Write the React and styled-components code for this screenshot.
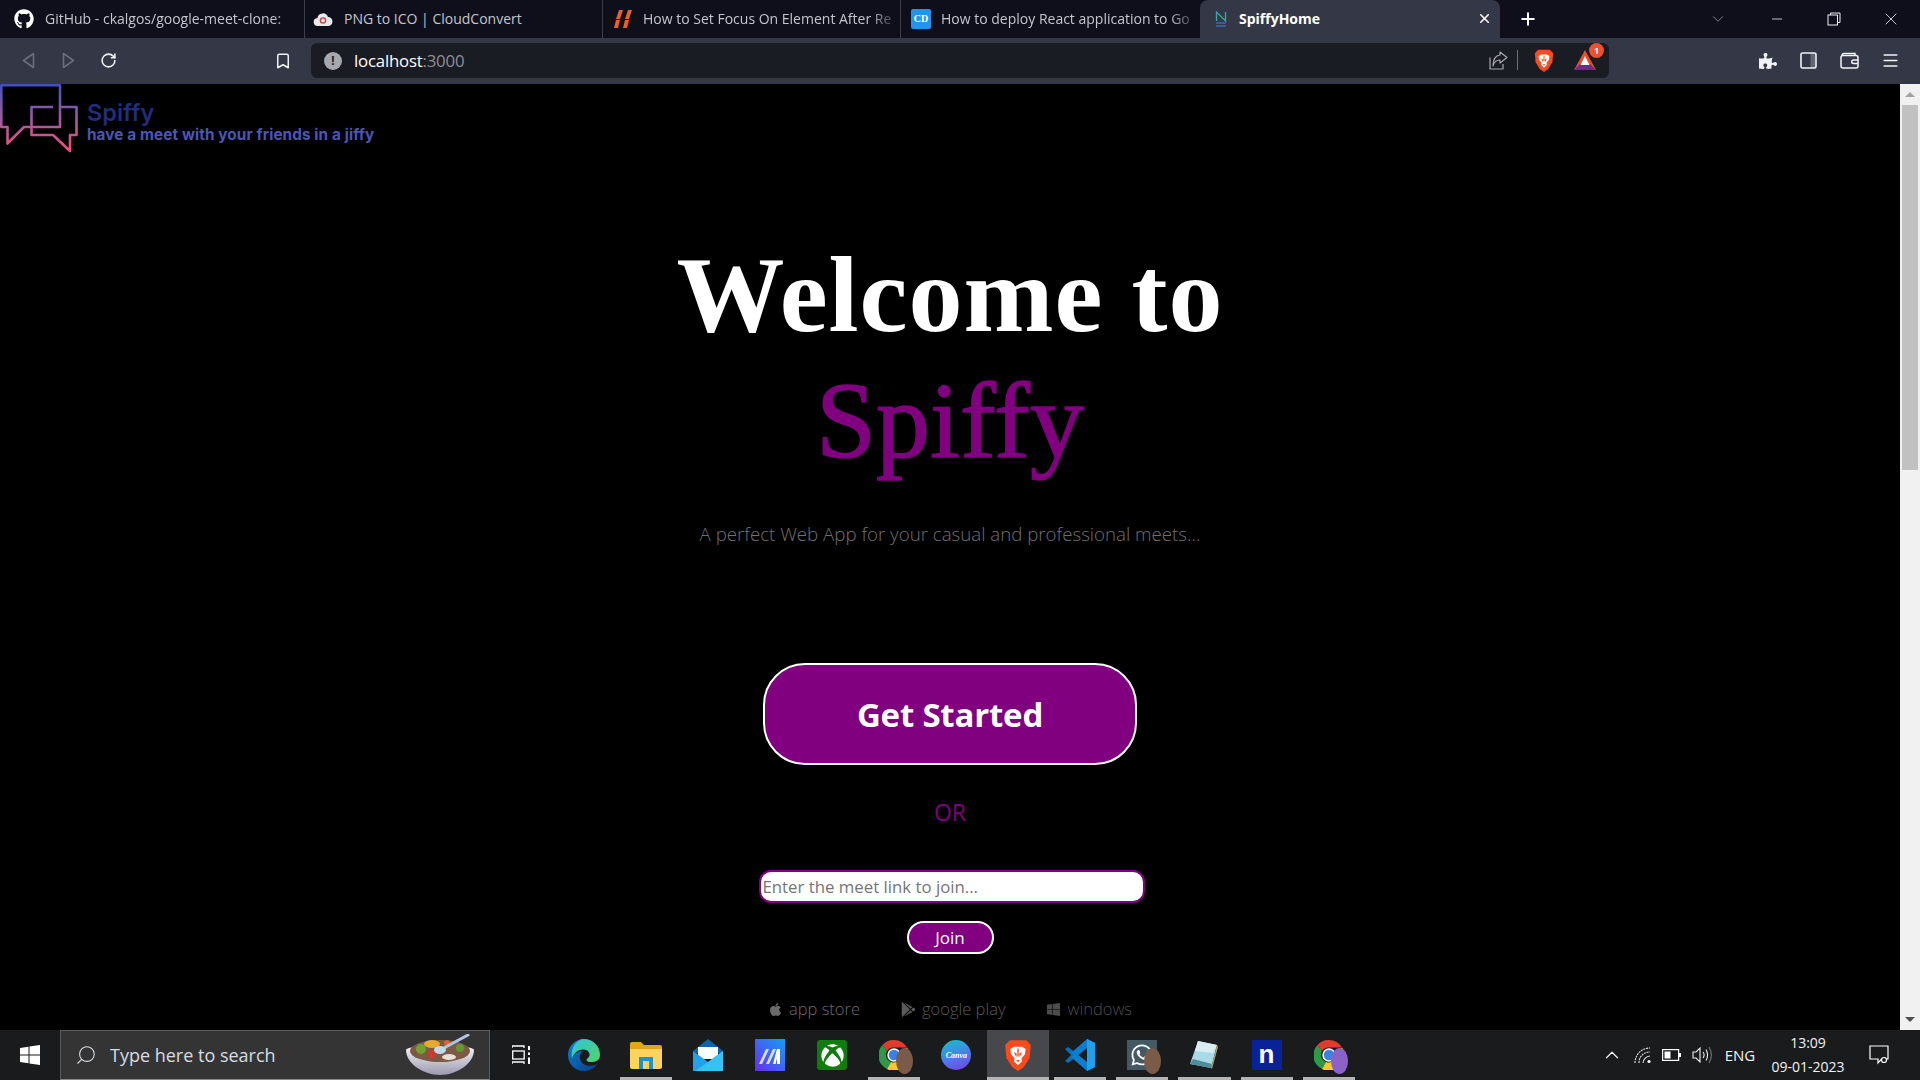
import React from "react";
import styled, { createGlobalStyle } from "styled-components";
import { FaGithub, FaApple, FaGooglePlay, FaWindows, FaXbox, FaWhatsapp, FaPuzzlePiece } from "react-icons/fa";
import { ChevronDown, Minus, X, Plus, RotateCw, Bookmark, Search, ChevronUp, Menu } from "lucide-react";

const UI = `"Open Sans", "Noto Sans", "Liberation Sans", sans-serif`;

const Global = createGlobalStyle`
  html, body { margin: 0; padding: 0; height: 100%; overflow: hidden; background: #000; }
  #root { height: 100%; }
  * { box-sizing: border-box; }
`;

const Screen = styled.div`
  width: 1920px; height: 1080px; display: flex; flex-direction: column;
  font-family: ${UI}; overflow: hidden;
`;

/* ---------- tab strip ---------- */
const TabStrip = styled.div`
  height: 38px; flex: none; display: flex; background: #0e0f1a;
`;
const Tab = styled.div`
  width: ${p => p.$w}px; height: 38px; flex: none; display: flex; align-items: center;
  padding-left: ${p => p.$pad}px; padding-bottom: 1px; gap: ${p => p.$gap}px; position: relative;
  background: ${p => (p.$active ? "#343846" : "transparent")};
  border-radius: ${p => (p.$active ? "8px 8px 0 0" : "0")};
  color: ${p => (p.$active ? "#fff" : "#c3c6cf")};
  font-size: 14px; font-weight: ${p => (p.$active ? 700 : 400)};
  border-right: ${p => (p.$sep ? "1px solid #3a3d4a" : "none")};
`;
const TabIcon = styled.span`
  width: 20px; height: 20px; flex: none; display: flex; align-items: center; justify-content: center;
`;
const TabLabel = styled.span`
  flex: 1; white-space: nowrap; overflow: hidden; padding-right: 4px;
  mask-image: ${p => (p.$fade ? "linear-gradient(to right, #000 88%, transparent 100%)" : "none")};
`;
const TabClose = styled.span`
  width: 32px; flex: none; display: flex; justify-content: center; color: #fff;
`;
const NewTab = styled.div`
  width: 55px; display: flex; align-items: center; justify-content: center; color: #fff;
`;
const WindowControls = styled.div`
  margin-left: auto; display: flex; align-items: center; color: #e4e5ea;
`;
const WinBtn = styled.div`
  width: ${p => p.$w || 57}px; height: 38px; display: flex; align-items: center; justify-content: center;
  color: ${p => p.$dim ? "#9da0aa" : "#eceef2"};
`;
const RestoreIcon = () => (
  <svg width="14" height="14" viewBox="0 0 14 14" fill="none" stroke="currentColor" strokeWidth="1">
    <rect x="1" y="3" width="9.5" height="10" /><path d="M3.5 3V1H13V10.5H10.5" />
  </svg>
);

/* ---------- toolbar ---------- */
const Toolbar = styled.div`
  height: 46px; flex: none; display: flex; align-items: flex-start; background: #343846;
  padding: 5px 8px 0 8px;
`;
const NavBtn = styled.div`
  width: ${p => p.$w || 40}px; height: 35px; flex: none; display: flex; align-items: center; justify-content: center;
  color: ${p => (p.$off ? "#6b6e7a" : "#f1f2f5")};
`;
const NavGap = styled.div`width: 135px; flex: none;`;
const AddressBar = styled.div`
  width: 1298px; height: 35px; flex: none; margin-left: 8px; margin-right: 138px;
  display: flex; align-items: center; padding-left: 13px; background: #1a1c24; border-radius: 6px;
  position: relative;
`;
const InfoDot = styled.span`
  width: 18px; height: 18px; border-radius: 50%; background: #a6a8ae; color: #1a1c24; flex: none;
  display: flex; align-items: center; justify-content: center; font: 700 13px "Liberation Sans", sans-serif;
`;
const Url = styled.span`
  margin-left: 12px; font-size: 16.8px; color: #fff; letter-spacing: -0.2px; span { color: #8d8f96; }
`;
const AddressActions = styled.div`
  margin-left: auto; display: flex; align-items: center; padding-right: 3px;
`;
const ActionSlot = styled.span`
  width: ${p => p.$w}px; margin-left: ${p => p.$ml || 0}px; display: flex; justify-content: center; align-items: center; position: relative; color: #9a9ca3;
`;
const ActionSep = styled.span`width: 1px; height: 20px; background: #6e7079; flex: none; margin: 0 14px 0 6px;`;
const Badge = styled.span`
  position: absolute; top: -6px; right: 2px; width: 15px; height: 15px; border-radius: 50%;
  background: #f0502d; color: #fff; font-size: 9px; font-weight: 700;
  display: flex; align-items: center; justify-content: center;
`;

/* ---------- viewport ---------- */
const Viewport = styled.div`flex: 1; min-height: 0; display: flex; background: #000;`;
const Page = styled.main`flex: 1; min-width: 0; overflow: hidden; display: flex; flex-direction: column;`;
const Brand = styled.header`height: 66px; flex: none; display: flex; gap: 9px;`;
const BrandText = styled.div`
  padding-top: 16px; display: flex; flex-direction: column; font-family: Inter, "Noto Sans", sans-serif; font-weight: 700;
`;
const BrandName = styled.div`font-size: 23.5px; line-height: 26px; color: #232c7e; font-weight: 600;`;
const BrandTag = styled.div`font-size: 15.3px; line-height: 18px; color: #4a56b6; letter-spacing: .1px;`;

const Hero = styled.section`
  padding-top: 82px; display: flex; flex-direction: column; align-items: center;
`;
const Title = styled.h1`
  margin: 0; font-family: "Liberation Serif", serif; font-size: 108px; line-height: 126px; text-align: center;
  font-weight: 700; color: #fff; letter-spacing: 1px;
  span { display: block; color: #800080; font-weight: 400; letter-spacing: 0; -webkit-text-stroke: 1.5px #800080; }
`;
const Subtitle = styled.p`
  margin: 36px 0 0; font-size: 18.7px; line-height: 28px; font-weight: 300; color: #707070;
`;
const GetStarted = styled.button`
  margin-top: 115px; width: 374px; height: 102px; border: 2.5px solid #fff; border-radius: 42px; background: #800080;
  color: #fff; font: 700 33px ${UI}; letter-spacing: -0.2px;
`;
const Or = styled.div`margin-top: 30px; font-size: 23px; line-height: 34px; font-weight: 400; color: #800080;`;
const JoinInput = styled.input`
  margin-top: 41px; width: 386px; height: 33px; border: 2px solid #800080; border-radius: 12px; background: #fff;
  padding: 0 2px; font: 400 16.8px ${UI}; margin-left: 3px;
  &::placeholder { color: #757575; opacity: 1; }
`;
const JoinBtn = styled.button`
  margin-top: 18px; width: 87px; height: 33px; border: 2px solid #fff; border-radius: 17px; background: #800080;
  color: #fff; font: 400 17px ${UI}; padding: 0;
`;
const Stores = styled.div`
  margin-top: 43px; display: flex; gap: 41px; margin-left: 0; font-size: 16.5px; line-height: 24px; font-weight: 300;
`;
const Store = styled.span`
  display: flex; align-items: center; gap: ${p => p.$gap}px; color: ${p => p.$c};
`;

/* ---------- scrollbar ---------- */
const Scrollbar = styled.div`
  width: 20px; flex: none; background: #f1f1f1; display: flex; flex-direction: column; align-items: center;
`;
const ScrollArrow = styled.div`
  height: 21px; flex: none; display: flex; align-items: center; justify-content: center;
  &::before {
    content: ""; border-left: 5px solid transparent; border-right: 5px solid transparent;
    ${p => (p.$down ? "border-top: 5px solid #505050;" : "border-bottom: 5px solid #a3a3a3;")}
  }
`;
const ScrollThumb = styled.div`width: 16px; height: 365px; flex: none; background: #c1c1c1;`;
const ScrollSpace = styled.div`flex: 1;`;

/* ---------- taskbar ---------- */
const Taskbar = styled.footer`
  height: 50px; flex: none; display: flex; background: #1a1b1d; color: #fff;
`;
const StartBtn = styled.div`width: 60px; flex: none; display: flex; align-items: center; justify-content: center;`;
const SearchBox = styled.div`
  width: 430px; flex: none; background: #343434; border: 1px solid #5a5a5a; border-bottom-color: #888;
  display: flex; align-items: center; padding-left: 14px; gap: 13px; overflow: hidden; position: relative;
  font-size: 18px; color: #d8dce0;
`;
const BowlWrap = styled.span`margin-left: auto; margin-right: 15px; display: flex;`;
const AppSlot = styled.div`
  width: ${p => p.$w || 62.05}px; flex: none; display: flex; align-items: center; justify-content: center; position: relative;
  background: ${p => (p.$active ? "#47484c" : "transparent")};
  &::after {
    content: ""; position: absolute; left: 5px; right: 5px; bottom: 0; height: 3px;
    background: ${p => (p.$open ? "#b4b4b4" : "transparent")};
    ${p => p.$active && "left: 0; right: 0;"}
  }
`;
const Overlay = styled.span`
  position: absolute; right: ${p => p.$r}px; bottom: ${p => p.$b}px; width: 17px; height: 26px; border-radius: 50%;
  background: ${p => p.$c};
`;
const Tray = styled.div`margin-left: auto; display: flex; align-items: center; padding-right: 18px;`;
const TraySlot = styled.div`
  width: ${p => p.$w}px; display: flex; align-items: center; justify-content: center; color: #f2f2f2;
  font-size: ${p => p.$fs || 14}px;
`;
const Clock = styled.div`
  width: 96px; text-align: center; font-size: 14px; line-height: 24px; color: #f2f2f2;
`;
const CanvaDisk = styled.span`
  width: 30px; height: 30px; border-radius: 50%;
  background: linear-gradient(160deg, #10c5c5 0%, #4d7bea 55%, #7a3bea 100%);
  font: italic 700 8px "Liberation Serif", serif; color: #fff; display: flex; align-items: center; justify-content: center;
`;
const NotionSquare = styled.span`
  width: 30px; height: 30px; background: #0a2299; color: #fff; display: flex; align-items: center; justify-content: center;
  font: 700 26px/1 "Liberation Sans", sans-serif; padding-bottom: 3px;
`;
const TileSquare = styled.span`
  width: 30px; height: 30px; display: flex; align-items: center; justify-content: center; background: ${p => p.$c}; color: #fff;
  border-radius: ${p => p.$r || 0}px;
`;

/* ---------- drawings ---------- */
const Logo = () => (
  <svg width="78" height="70" viewBox="0 0 78 70" fill="none" strokeWidth="2.6" strokeLinejoin="round">
    <defs>
      <linearGradient id="lg" gradientUnits="userSpaceOnUse" x1="0" y1="0" x2="0" y2="66">
        <stop offset="0" stopColor="#4052b8" /><stop offset=".55" stopColor="#a55aa0" /><stop offset="1" stopColor="#ef4d7c" />
      </linearGradient>
    </defs>
    <path stroke="url(#lg)" d="M1.3 1.3H60V43H24L7.5 59.5V43H1.3Z" />
    <path stroke="url(#lg)" d="M53 23H31.5V51H53L70 67V51H76.5V23H60" />
  </svg>
);
const CloudIcon = () => (
  <svg width="20" height="16" viewBox="0 0 20 16">
    <path fill="#e9e9e9" d="M5 15a4 4 0 0 1-.6-8A5.5 5.5 0 0 1 15 6a4.5 4.5 0 0 1 0 9Z" />
    <circle cx="10" cy="9.5" r="2.6" fill="none" stroke="#d63a3a" strokeWidth="1.4" />
  </svg>
);
const SlashIcon = () => (
  <svg width="20" height="20" viewBox="0 0 20 20" fill="#e8602f">
    <path d="M6 1h4L7 10H3Z M3 11h4l-2 8H1Z M15 1h4l-3 9h-4Z M12 11h4l-2 8h-4Z" />
  </svg>
);
const CdIcon = styled.span`
  width: 20px; height: 20px; background: #1e96ef; border-radius: 2px; color: #fff;
  font: 700 10px "Liberation Serif", serif; display: flex; align-items: center; justify-content: center;
`;
const SpiffyFav = () => (
  <svg width="12" height="18" viewBox="0 0 12 18" fill="none" strokeWidth="1.3">
    <path stroke="#35a7b0" d="M1.5 11V2L10.5 11V2" /><path stroke="#3a66c4" d="M1 13h10M1 16h10" />
  </svg>
);
const BackIcon = ({ flip }) => (
  <svg width="13" height="17" viewBox="0 0 13 17" fill="none" stroke="currentColor" strokeWidth="1.6" strokeLinejoin="round"
    style={flip ? { transform: "scaleX(-1)" } : undefined}>
    <path d="M11.5 1.5V15.5L1.5 8.5Z" />
  </svg>
);
const ShareIcon = () => (
  <svg width="19" height="19" viewBox="0 0 19 19" fill="none" stroke="#a5a7ad" strokeWidth="1.2" strokeLinejoin="round">
    <path d="M1 6.5V18H14V13" /><path d="M11 1L18 6.5L11 12V9C7 9 5 11 4 15C4 9 6 4.5 11 4Z" />
  </svg>
);
const BraveIcon = ({ size }) => (
  <svg width={size} height={size * 1.17} viewBox="0 0 24 28">
    <path fill="#fb4a1c" d="M5 1H19L23 5L22 16L17 24L12 27.5L7 24L2 16L1 5Z" />
    <path fill="#fff" d="M5.5 8.5L8.5 6.5H15.5L18.5 8.5L18 13L15 16.5L15.5 19L12 22.5L8.5 19L9 16.5L6 13Z" />
    <path fill="#fb4a1c" d="M8.5 11L11 12.5L10.5 15.5Z M15.5 11L13 12.5L13.5 15.5Z M10.5 18H13.5L12 20Z M11.4 8H12.6V15H11.4Z" />
  </svg>
);
const BatIcon = () => (
  <svg width="24" height="22" viewBox="0 0 24 22">
    <path fill="#f04a2a" d="M12 1L23 21H1Z" />
    <path fill="#6e2b8e" d="M1 21L7 15H17L23 21Z" />
    <path fill="#fff" d="M12 7L16.5 16H7.5Z" />
  </svg>
);
const SidebarIcon = () => (
  <svg width="17" height="17" viewBox="0 0 17 17" fill="none" stroke="#f1f2f5" strokeWidth="1.6">
    <rect x="1" y="1" width="15" height="15" rx="1.5" /><path d="M10 1V16" strokeWidth="5" strokeOpacity=".25" transform="translate(3)" />
  </svg>
);
const WalletIcon = () => (
  <svg width="19" height="17" viewBox="0 0 19 17" fill="none" stroke="#f1f2f5" strokeWidth="1.5">
    <path d="M2 3.5A2 2 0 0 1 4 1.5H15V4" /><rect x="1" y="3.5" width="17" height="12.5" rx="2" /><path d="M18 8H13.5A1.5 1.5 0 0 0 13.5 11.5H18" />
  </svg>
);
const WinLogo = () => (
  <svg width="20" height="20" viewBox="0 0 20 20" fill="#fff">
    <path d="M0 3L8.5 1.8V9.5H0Z M9.5 1.6L20 0V9.5H9.5Z M0 10.5H8.5V18.2L0 17Z M9.5 10.5H20V20L9.5 18.4Z" />
  </svg>
);
const Bowl = () => (
  <svg width="68" height="42" viewBox="0 0 68 42">
    <defs>
      <linearGradient id="bw" x1="0" y1="0" x2="0" y2="1"><stop offset="0" stopColor="#f6f5fb" /><stop offset="1" stopColor="#9c98ad" /></linearGradient>
    </defs>
    <path fill="url(#bw)" d="M0 16C0 10 68 10 68 16C68 30 50 41 34 41C18 41 0 30 0 16Z" />
    <ellipse cx="34" cy="17" rx="30" ry="11" fill="#7c5a45" />
    <circle cx="15" cy="15" r="5" fill="#6fa32b" /><circle cx="26" cy="20" r="4" fill="#cf3a2e" />
    <ellipse cx="26" cy="10" rx="8" ry="4" fill="#e5a92c" /><circle cx="54" cy="14" r="4" fill="#5f9b2c" />
    <ellipse cx="43" cy="23" rx="7" ry="3" fill="#eadfd6" /><circle cx="41" cy="9" r="3" fill="#d9662b" />
    <path stroke="#a9c8e8" strokeWidth="3" strokeLinecap="round" d="M36 15L62 1" />
    <ellipse cx="34" cy="16" rx="6" ry="4" fill="#c2d8ee" />
  </svg>
);
const TaskViewIcon = () => (
  <svg width="20" height="20" viewBox="0 0 20 20" fill="none" stroke="#fff" strokeWidth="1.3">
    <path d="M0 1H12V3M0 1V3M0 17V19M0 17H12V19" /><rect x="0.7" y="6" width="11.5" height="8" /><path d="M17 1V5M17 7.5V10M17 12.5V19" strokeWidth="2" />
  </svg>
);
const EdgeIcon = () => (
  <svg width="32" height="32" viewBox="0 0 32 32">
    <defs>
      <linearGradient id="eg1" x1="0" y1="0" x2="1" y2="1"><stop offset="0" stopColor="#2fc3d8" /><stop offset="1" stopColor="#52d56b" /></linearGradient>
      <linearGradient id="eg2" x1="0" y1="0" x2="1" y2="1"><stop offset="0" stopColor="#0c7fd0" /><stop offset="1" stopColor="#0a3f8c" /></linearGradient>
    </defs>
    <path fill="url(#eg2)" d="M16 0C7 0 0 7 0 16C0 25 7 32 16 32C22 32 27 29 29 25C24 28 14 28 12 20C11 16 13 13 15 12C9 12 5 16 4 20C4 10 10 3 18 3Z" />
    <path fill="url(#eg1)" d="M16 0C25 0 32 7 32 16C32 22 27 23 23 23C19 23 17 21 20 19C23 17 22 11 16 10.5C10 10 5 15 4 20C2 8 9 0 16 0Z" />
  </svg>
);
const FolderIcon = () => (
  <svg width="32" height="28" viewBox="0 0 32 28">
    <path fill="#e5a41e" d="M0 3A2 2 0 0 1 2 1H11L14 4H30A2 2 0 0 1 32 6V10H0Z" />
    <path fill="#fbd35d" d="M0 8H32V26A2 2 0 0 1 30 28H2A2 2 0 0 1 0 26Z" />
    <path fill="#1f8fd6" d="M9 16H23V28H19V20H13V28H9Z" />
  </svg>
);
const MailIcon = () => (
  <svg width="30" height="32" viewBox="0 0 30 32">
    <path fill="#0b63b5" d="M15 0L30 12V14H0V12Z" />
    <path fill="#fff" d="M5 8H25V20H5Z" />
    <path fill="#1ea2ea" d="M0 12L15 23L30 12V32H0Z" />
    <path fill="#35c3f5" d="M15 23L30 12V32H2Z" />
  </svg>
);
const LinearTile = () => (
  <svg width="30" height="32" viewBox="0 0 30 32">
    <defs><linearGradient id="ln" x1="0" y1="1" x2="1" y2="0"><stop offset="0" stopColor="#6a2cf0" /><stop offset="1" stopColor="#12a0f5" /></linearGradient></defs>
    <rect width="30" height="32" fill="url(#ln)" />
    <path fill="#d8ddff" d="M4 25L11 10H14L7 25Z M11 25L18 10H21L14 25Z" />
    <path fill="#fff" d="M18 25L22 10H25V25H22V19L20.5 25Z" />
  </svg>
);
const Chrome = () => (
  <svg width="30" height="30" viewBox="0 0 30 30">
    <path fill="#e23b2e" d="M15 0A15 15 0 0 1 28 7.5H15A7.5 7.5 0 0 0 8 11L3.5 5A15 15 0 0 1 15 0Z" />
    <path fill="#2e9a47" d="M3.5 5L8 11A7.5 7.5 0 0 0 12 22L8 29A15 15 0 0 1 3.5 5Z" />
    <path fill="#fbc82c" d="M28 7.5A15 15 0 0 1 8 29L12 22A7.5 7.5 0 0 0 22 13Z" />
    <circle cx="15" cy="15" r="6" fill="#3b7fe8" stroke="#fff" strokeWidth="1.5" />
  </svg>
);
const VsCode = () => (
  <svg width="30" height="32" viewBox="0 0 30 32">
    <path fill="#0a6fb8" d="M0 10L3 8L11 14V18L3 24L0 22L6 16Z" />
    <path fill="#0a7fd0" d="M22 0L30 4V28L22 32L6 18L11 14L22 23V9L11 18L6 14Z" />
    <path fill="#1fa0ef" d="M22 0L30 4V28L22 32Z" />
  </svg>
);
const NotepadIcon = () => (
  <svg width="30" height="32" viewBox="0 0 30 32">
    <path fill="#a8dbe6" d="M9 2L28 6L22 29L1 25Z" />
    <path fill="#4f8c9c" d="M1 25L22 29L23 25L4 20Z" />
    <path fill="#d8eef2" d="M9 2L28 6L24 14L6 12Z" />
    <path fill="#b0a06a" d="M28 6L29 8L23 30L22 29Z" />
  </svg>
);
const WifiIcon = () => (
  <svg width="18" height="18" viewBox="0 0 18 18" fill="none" stroke="#e4e4e4" strokeWidth="1.1">
    <path d="M1 17C1 9 7 2 16 2" strokeDasharray="2 .8" /><path d="M5 17C5 11 9 6 16 6" strokeDasharray="2 .8" /><path d="M9 17C9 14 12 10 16 10" />
    <circle cx="15" cy="15.5" r="1.6" fill="#fff" stroke="none" />
  </svg>
);
const BatteryIcon = () => (
  <svg width="19" height="12" viewBox="0 0 19 12">
    <rect x=".6" y=".6" width="16" height="10.8" fill="none" stroke="#fff" strokeWidth="1.2" />
    <rect x="2.5" y="2.5" width="6" height="7" fill="#fff" /><rect x="17" y="4" width="2" height="4" fill="#fff" />
  </svg>
);
const VolumeIcon = () => (
  <svg width="20" height="18" viewBox="0 0 20 18" fill="none" stroke="#eee" strokeWidth="1.1">
    <path d="M1 6H4L8 2V16L4 12H1Z" /><path d="M11 6C12.5 8 12.5 10 11 12" /><path d="M14 3.5C16 7 16 11 14 14.5" /><path d="M17 1C20 6 20 12 17 17" stroke="#777" />
  </svg>
);
const ActionIcon = () => (
  <svg width="20" height="20" viewBox="0 0 20 20" fill="none" stroke="#fff" strokeWidth="1.2">
    <path d="M1 1H19V14H12.5L9 18V14H1Z" /><circle cx="15" cy="15" r="2.5" fill="#1a1b1d" />
  </svg>
);

const tabs = [
  { w: 305, pad: 14, gap: 11, icon: <FaGithub size={20} color="#fff" />, label: "GitHub - ckalgos/google-meet-clone:", fade: true, sep: true },
  { w: 298, pad: 8, gap: 11, icon: <CloudIcon />, label: "PNG to ICO | CloudConvert", sep: true },
  { w: 298, pad: 10, gap: 10, icon: <SlashIcon />, label: "How to Set Focus On Element After Re", fade: true, sep: true },
  { w: 299, pad: 10, gap: 10, icon: <CdIcon>CD</CdIcon>, label: "How to deploy React application to Go", fade: true },
];

const apps = [
  { icon: <EdgeIcon /> },
  { icon: <FolderIcon />, open: true },
  { icon: <MailIcon /> },
  { icon: <LinearTile /> },
  { icon: <TileSquare $c="#107c10" $r={3}><FaXbox size={23} /></TileSquare> },
  { icon: <Chrome />, open: true, over: "#7a5a48" },
  { icon: <CanvaDisk>Canva</CanvaDisk> },
  { icon: <BraveIcon size={28} />, active: true, open: true },
  { icon: <VsCode />, open: true },
  { icon: <TileSquare $c="#445a63"><FaWhatsapp size={24} /></TileSquare>, open: true, over: "#7a5a48" },
  { icon: <NotepadIcon />, open: true },
  { icon: <NotionSquare>n</NotionSquare>, open: true },
  { icon: <Chrome />, open: true, over: "#8a62c8" },
];

export default function App() {
  return (
    <Screen>
      <Global />
      <TabStrip>
        {tabs.map(t => (
          <Tab key={t.label} $w={t.w} $pad={t.pad} $gap={t.gap} $sep={t.sep}>
            <TabIcon>{t.icon}</TabIcon>
            <TabLabel $fade={t.fade}>{t.label}</TabLabel>
          </Tab>
        ))}
        <Tab $w={300} $pad={11} $gap={8} $active>
          <TabIcon><SpiffyFav /></TabIcon>
          <TabLabel>SpiffyHome</TabLabel>
          <TabClose><X size={15} strokeWidth={2.5} /></TabClose>
        </Tab>
        <NewTab><Plus size={20} strokeWidth={2.4} /></NewTab>
        <WindowControls>
          <WinBtn $dim $w={60}><ChevronDown size={18} strokeWidth={1} /></WinBtn>
          <WinBtn><Minus size={16} strokeWidth={1.2} /></WinBtn>
          <WinBtn><RestoreIcon /></WinBtn>
          <WinBtn $w={58}><X size={20} strokeWidth={1} /></WinBtn>
        </WindowControls>
      </TabStrip>

      <Toolbar>
        <NavBtn $off><BackIcon /></NavBtn>
        <NavBtn $off><BackIcon flip /></NavBtn>
        <NavBtn><RotateCw size={17} strokeWidth={2.2} /></NavBtn>
        <NavGap />
        <NavBtn><Bookmark size={18} strokeWidth={2} /></NavBtn>
        <AddressBar>
          <InfoDot>!</InfoDot>
          <Url>localhost<span>:3000</span></Url>
          <AddressActions>
            <ActionSlot $w={26}><ShareIcon /></ActionSlot>
            <ActionSep />
            <ActionSlot $w={24}><BraveIcon size={20} /></ActionSlot>
            <ActionSlot $w={42} $ml={8}>
              <BatIcon /><Badge>1</Badge>
            </ActionSlot>
          </AddressActions>
        </AddressBar>
        <NavBtn $w={41}><FaPuzzlePiece size={18} /></NavBtn>
        <NavBtn $w={41}><SidebarIcon /></NavBtn>
        <NavBtn $w={41}><WalletIcon /></NavBtn>
        <NavBtn $w={41}><Menu size={19} strokeWidth={1.8} /></NavBtn>
      </Toolbar>

      <Viewport>
        <Page>
          <Brand>
            <Logo />
            <BrandText>
              <BrandName>Spiffy</BrandName>
              <BrandTag>have a meet with your friends in a jiffy</BrandTag>
            </BrandText>
          </Brand>
          <Hero>
            <Title>Welcome to<span>Spiffy</span></Title>
            <Subtitle>A perfect Web App for your casual and professional meets...</Subtitle>
            <GetStarted>Get Started</GetStarted>
            <Or>OR</Or>
            <JoinInput placeholder="Enter the meet link to join..." />
            <JoinBtn>Join</JoinBtn>
            <Stores>
              <Store $c="#6a6a6a" $gap={6}><FaApple size={15} />app store</Store>
              <Store $c="#5a5a5a" $gap={6}><FaGooglePlay size={15} />google play</Store>
              <Store $c="#4c4c4c" $gap={6}><FaWindows size={15} />windows</Store>
            </Stores>
          </Hero>
        </Page>
        <Scrollbar>
          <ScrollArrow />
          <ScrollThumb />
          <ScrollSpace />
          <ScrollArrow $down />
        </Scrollbar>
      </Viewport>

      <Taskbar>
        <StartBtn><WinLogo /></StartBtn>
        <SearchBox>
          <Search size={22} strokeWidth={1.2} style={{ transform: "scaleX(-1)" }} />
          Type here to search
          <BowlWrap><Bowl /></BowlWrap>
        </SearchBox>
        <AppSlot $w={63}><TaskViewIcon /></AppSlot>
        {apps.map((a, i) => (
          <AppSlot key={i} $open={a.open} $active={a.active}>
            {a.icon}
            {a.over && <Overlay $c={a.over} $r={12} $b={6} />}
          </AppSlot>
        ))}
        <Tray>
          <TraySlot $w={32}><ChevronUp size={22} strokeWidth={1.3} /></TraySlot>
          <TraySlot $w={30}><WifiIcon /></TraySlot>
          <TraySlot $w={26}><BatteryIcon /></TraySlot>
          <TraySlot $w={36}><VolumeIcon /></TraySlot>
          <TraySlot $w={40} $fs={15}>ENG</TraySlot>
          <Clock>13:09<br />09-01-2023</Clock>
          <TraySlot $w={46}><ActionIcon /></TraySlot>
        </Tray>
      </Taskbar>
    </Screen>
  );
}
